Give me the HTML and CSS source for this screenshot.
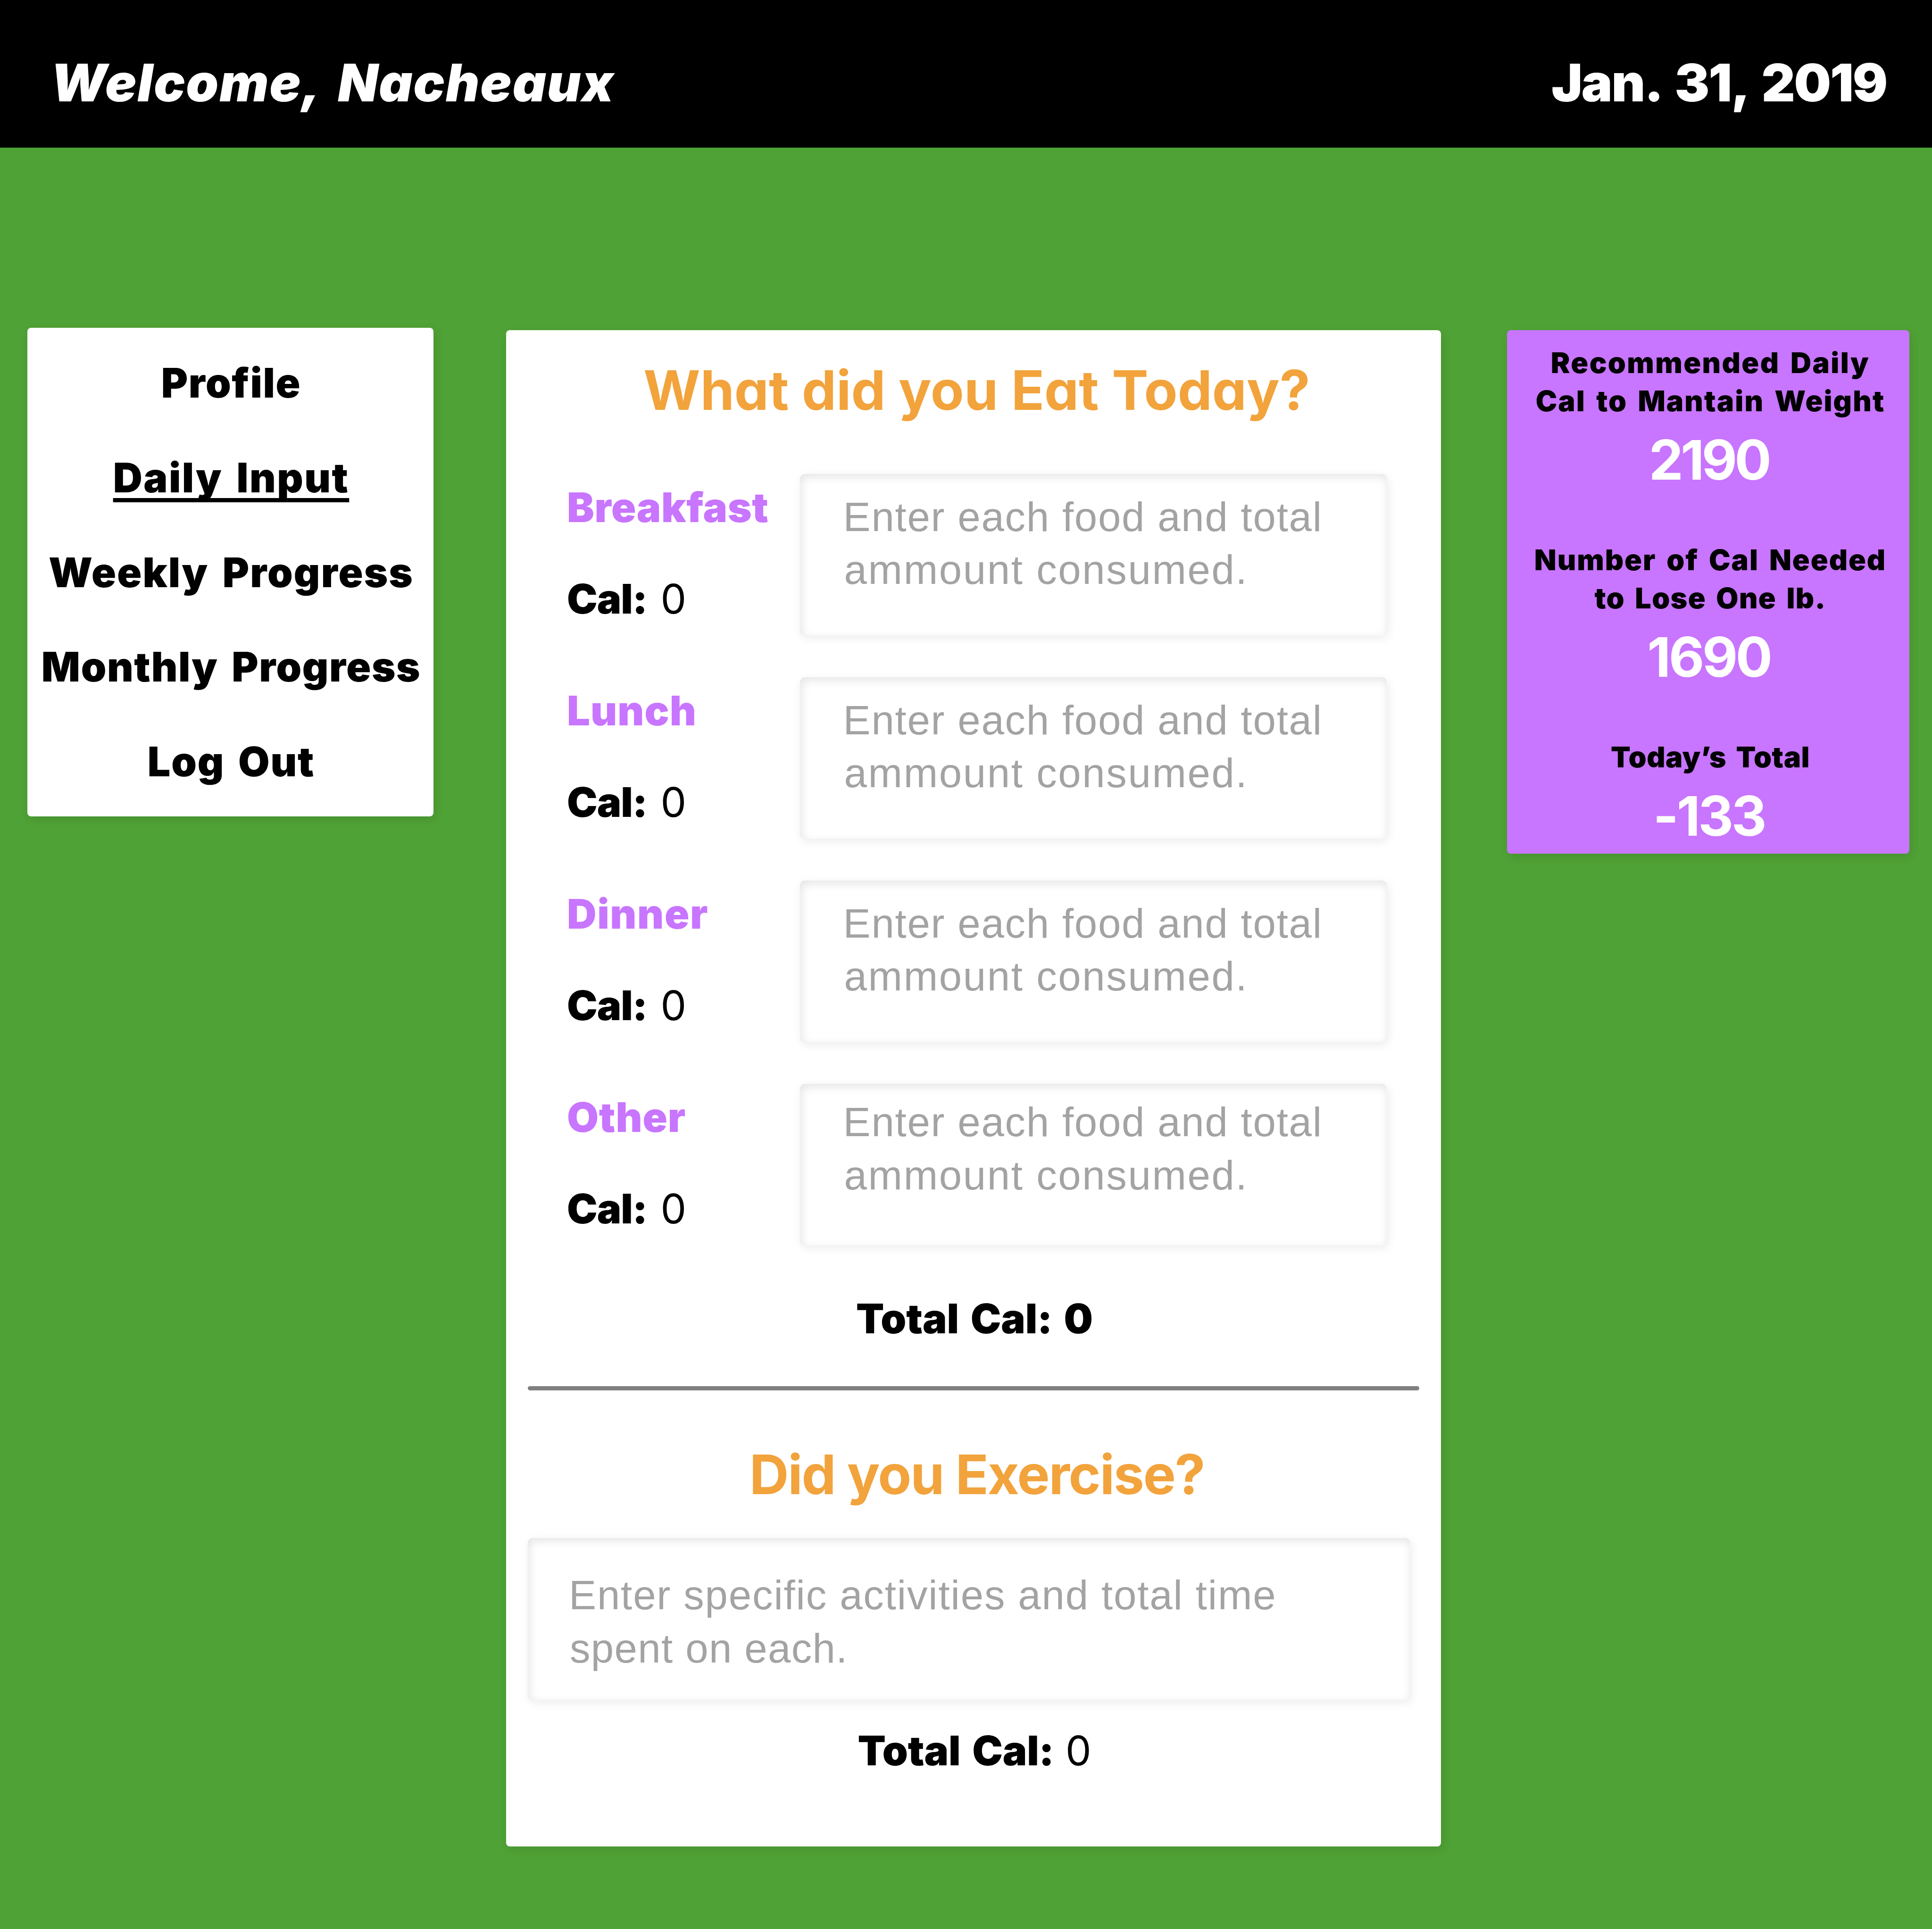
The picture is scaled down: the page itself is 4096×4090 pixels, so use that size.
FILE: index.html
```html
<!DOCTYPE html>
<html lang="en">
<head>
<meta charset="utf-8">
<title>Daily Input</title>
<link rel="stylesheet" href="styles.css">
</head>
<body>
<header class="topbar">
  <h1 class="welcome">Welcome, Nacheaux</h1>
  <p class="date">Jan. 31, 2019</p>
</header>
<main class="page">
  <nav class="card menu">
    <a class="menu-item profile"><span>Profile</span></a>
    <a class="menu-item daily current"><span>Daily Input</span></a>
    <a class="menu-item weekly"><span>Weekly Progress</span></a>
    <a class="menu-item monthly"><span>Monthly Progress</span></a>
    <a class="menu-item logout"><span>Log Out</span></a>
  </nav>

  <section class="card entry">
    <h2 class="title eat">What did you Eat Today?</h2>
    <div class="meals">
      <div class="meal">
        <div class="meal-info">
          <h3 class="meal-name breakfast">Breakfast</h3>
          <p class="cal"><b>Cal:</b> <span>0</span></p>
        </div>
        <div class="field"><span class="l1">Enter each food and total</span><br><span class="l2">ammount consumed.</span></div>
      </div>
      <div class="meal">
        <div class="meal-info">
          <h3 class="meal-name lunch">Lunch</h3>
          <p class="cal"><b>Cal:</b> <span>0</span></p>
        </div>
        <div class="field"><span class="l1">Enter each food and total</span><br><span class="l2">ammount consumed.</span></div>
      </div>
      <div class="meal">
        <div class="meal-info">
          <h3 class="meal-name dinner">Dinner</h3>
          <p class="cal"><b>Cal:</b> <span>0</span></p>
        </div>
        <div class="field"><span class="l1">Enter each food and total</span><br><span class="l2">ammount consumed.</span></div>
      </div>
      <div class="meal">
        <div class="meal-info">
          <h3 class="meal-name other">Other</h3>
          <p class="cal"><b>Cal:</b> <span>0</span></p>
        </div>
        <div class="field field-high"><span class="l1">Enter each food and total</span><br><span class="l2">ammount consumed.</span></div>
      </div>
    </div>
    <p class="total food-total"><b class="total-name">Total Cal:</b> <b>0</b></p>
    <hr class="rule">
    <h2 class="title exercise">Did you Exercise?</h2>
    <div class="field field-wide"><span class="l3">Enter specific activities and total time</span><br><span class="l4">spent on each.</span></div>
    <p class="total exercise-total"><b class="total-name">Total Cal:</b> <span>0</span></p>
  </section>

  <aside class="card stats">
    <div class="stat">
      <h3 class="stat-name"><span class="s1">Recommended Daily</span><br><span class="s2">Cal to Mantain Weight</span></h3>
      <p class="stat-value">2190</p>
    </div>
    <div class="stat">
      <h3 class="stat-name"><span class="s3">Number of Cal Needed</span><br><span class="s4">to Lose One lb.</span></h3>
      <p class="stat-value v2">1690</p>
    </div>
    <div class="stat">
      <h3 class="stat-name"><span class="s5">Today’s Total</span></h3>
      <p class="stat-value v3">-133</p>
    </div>
  </aside>
</main>
</body>
</html>
```
FILE: styles.css
```css
* { box-sizing: border-box; }

body {
  margin: 0;
  width: 4096px;
  height: 4090px;
  overflow: hidden;
  background: #4fa235;
  color: #000;
  font-family: Inter, "Liberation Sans", sans-serif;
}

h1, h2, h3, p { margin: 0; }

/* Header */
.topbar {
  display: flex;
  justify-content: space-between;
  align-items: flex-start;
  height: 313px;
  padding: 115px 96px 0 107px;
  background: #000;
  color: #fff;
  font-size: 110.5px;
  font-weight: 900;
  line-height: 120px;
  white-space: nowrap;
}
.welcome { font: inherit; font-style: italic; letter-spacing: 1.85px; word-spacing: 16px; }
.date { letter-spacing: -2.24px; word-spacing: 12px; }

/* Three columns */
.page {
  display: grid;
  grid-template-columns: 861px 1982px 853px;
  column-gap: 154px;
  align-items: start;
  padding: 386.5px 0 0 58px;
}
.menu { margin-top: -4.5px; }
.card {
  border-radius: 8px;
  background: #fff;
  box-shadow: 4px 7px 20px rgba(0, 0, 0, 0.1);
  white-space: nowrap;
}

/* Navigation */
.menu {
  display: flex;
  flex-direction: column;
  height: 1036px;
  padding-top: 17px;
  padding-left: 3px;
  text-align: center;
}
.menu-item {
  font-size: 86px;
  font-weight: 900;
  line-height: 200.8px;
  word-spacing: 10px;
}
.profile { letter-spacing: 1.59px; }
.daily { letter-spacing: 2.42px; }
.weekly { letter-spacing: 2.13px; }
.monthly { letter-spacing: 1.56px; }
.logout { letter-spacing: 1.76px; }
.current {
  text-decoration: underline;
  text-decoration-thickness: 9.4px;
  text-underline-offset: 11.5px;
  text-decoration-skip-ink: none;
}

/* Entry form */
.entry {
  display: flex;
  flex-direction: column;
  height: 3215px;
  padding: 67px 46px 0;
}
.title {
  padding-left: 14px;
  color: #f2a33c;
  font-size: 116px;
  font-weight: 700;
  line-height: 120px;
  text-align: center;
  font-feature-settings: "cv11";
}
.meals {
  display: grid;
  row-gap: 87.8px;
  margin-top: 118.8px;
  padding-left: 83px;
}
.meal {
  display: grid;
  grid-template-columns: 494px 1243.5px;
  height: 343.2px;
}
.meal-info {
  display: flex;
  flex-direction: column;
  gap: 93.7px;
  padding-top: 20.7px;
  font-size: 86.6px;
  line-height: 100px;
}
.meal-name { color: #c875ff; font-size: 86.6px; font-weight: 900; }
.breakfast { letter-spacing: 0.6px; }
.lunch { letter-spacing: 1.03px; }
.dinner { letter-spacing: 1.56px; }
.other { letter-spacing: 0.72px; }
.cal b, .total b { font-weight: 900; }
.cal b { letter-spacing: -1.08px; }
.cal { word-spacing: 4px; }
.field {
  height: 343.2px;
  padding: 34.6px 0 0 91.6px;
  border-radius: 10px;
  background: #fff;
  box-shadow: inset 3px 6px 20px rgba(0, 0, 0, 0.11), 3px 5px 20px rgba(0, 0, 0, 0.08);
  color: #a3a3a3;
  font-family: "Liberation Sans", Arial, sans-serif;
  font-size: 87px;
  line-height: 112.6px;
}
.l1 { letter-spacing: 1.76px; }
.l2 { margin-left: 2px; letter-spacing: 2.6px; }
.l3 { letter-spacing: 1.85px; }
.l4 { margin-left: 2px; letter-spacing: 1.36px; }
.field-high { padding-top: 25px; }
.total {
  padding-left: 4px;
  font-size: 86.6px;
  line-height: 100px;
  text-align: center;
}
.total-name { letter-spacing: -0.25px; word-spacing: 8px; }
.food-total { margin-top: 104.7px; }
.rule {
  width: 1890px;
  height: 9px;
  margin: 93.3px 0 0;
  border: 0;
  border-radius: 5px;
  background: #808080;
}
.exercise { margin-top: 118px; letter-spacing: -2.2px; }
.field-wide {
  width: 1870px;
  margin-top: 75px;
  padding: 65px 0 0 87px;
}
.exercise-total { margin-top: 57px; }

/* Calorie summary */
.stats {
  display: flex;
  flex-direction: column;
  gap: 112.3px;
  width: 853px;
  height: 1110px;
  margin-left: -14px;
  padding-top: 29.6px;
  padding-left: 9px;
  background: #c875ff;
  text-align: center;
}
.stat-name {
  font-size: 61px;
  font-weight: 900;
  line-height: 80.6px;
  word-spacing: 8px;
}
.s1 { letter-spacing: 2.39px; }
.s2 { letter-spacing: 2.08px; }
.s3 { letter-spacing: 1.92px; }
.s4 { letter-spacing: 1.27px; }
.s5 { letter-spacing: 0.39px; }
.stat-value {
  margin-top: 24.6px;
  padding-right: 6px;
  color: #fff;
  font-size: 116px;
  font-weight: 700;
  line-height: 120px;
  letter-spacing: -5.5px;
}
.v2, .v3 { letter-spacing: -4.4px; }
```
